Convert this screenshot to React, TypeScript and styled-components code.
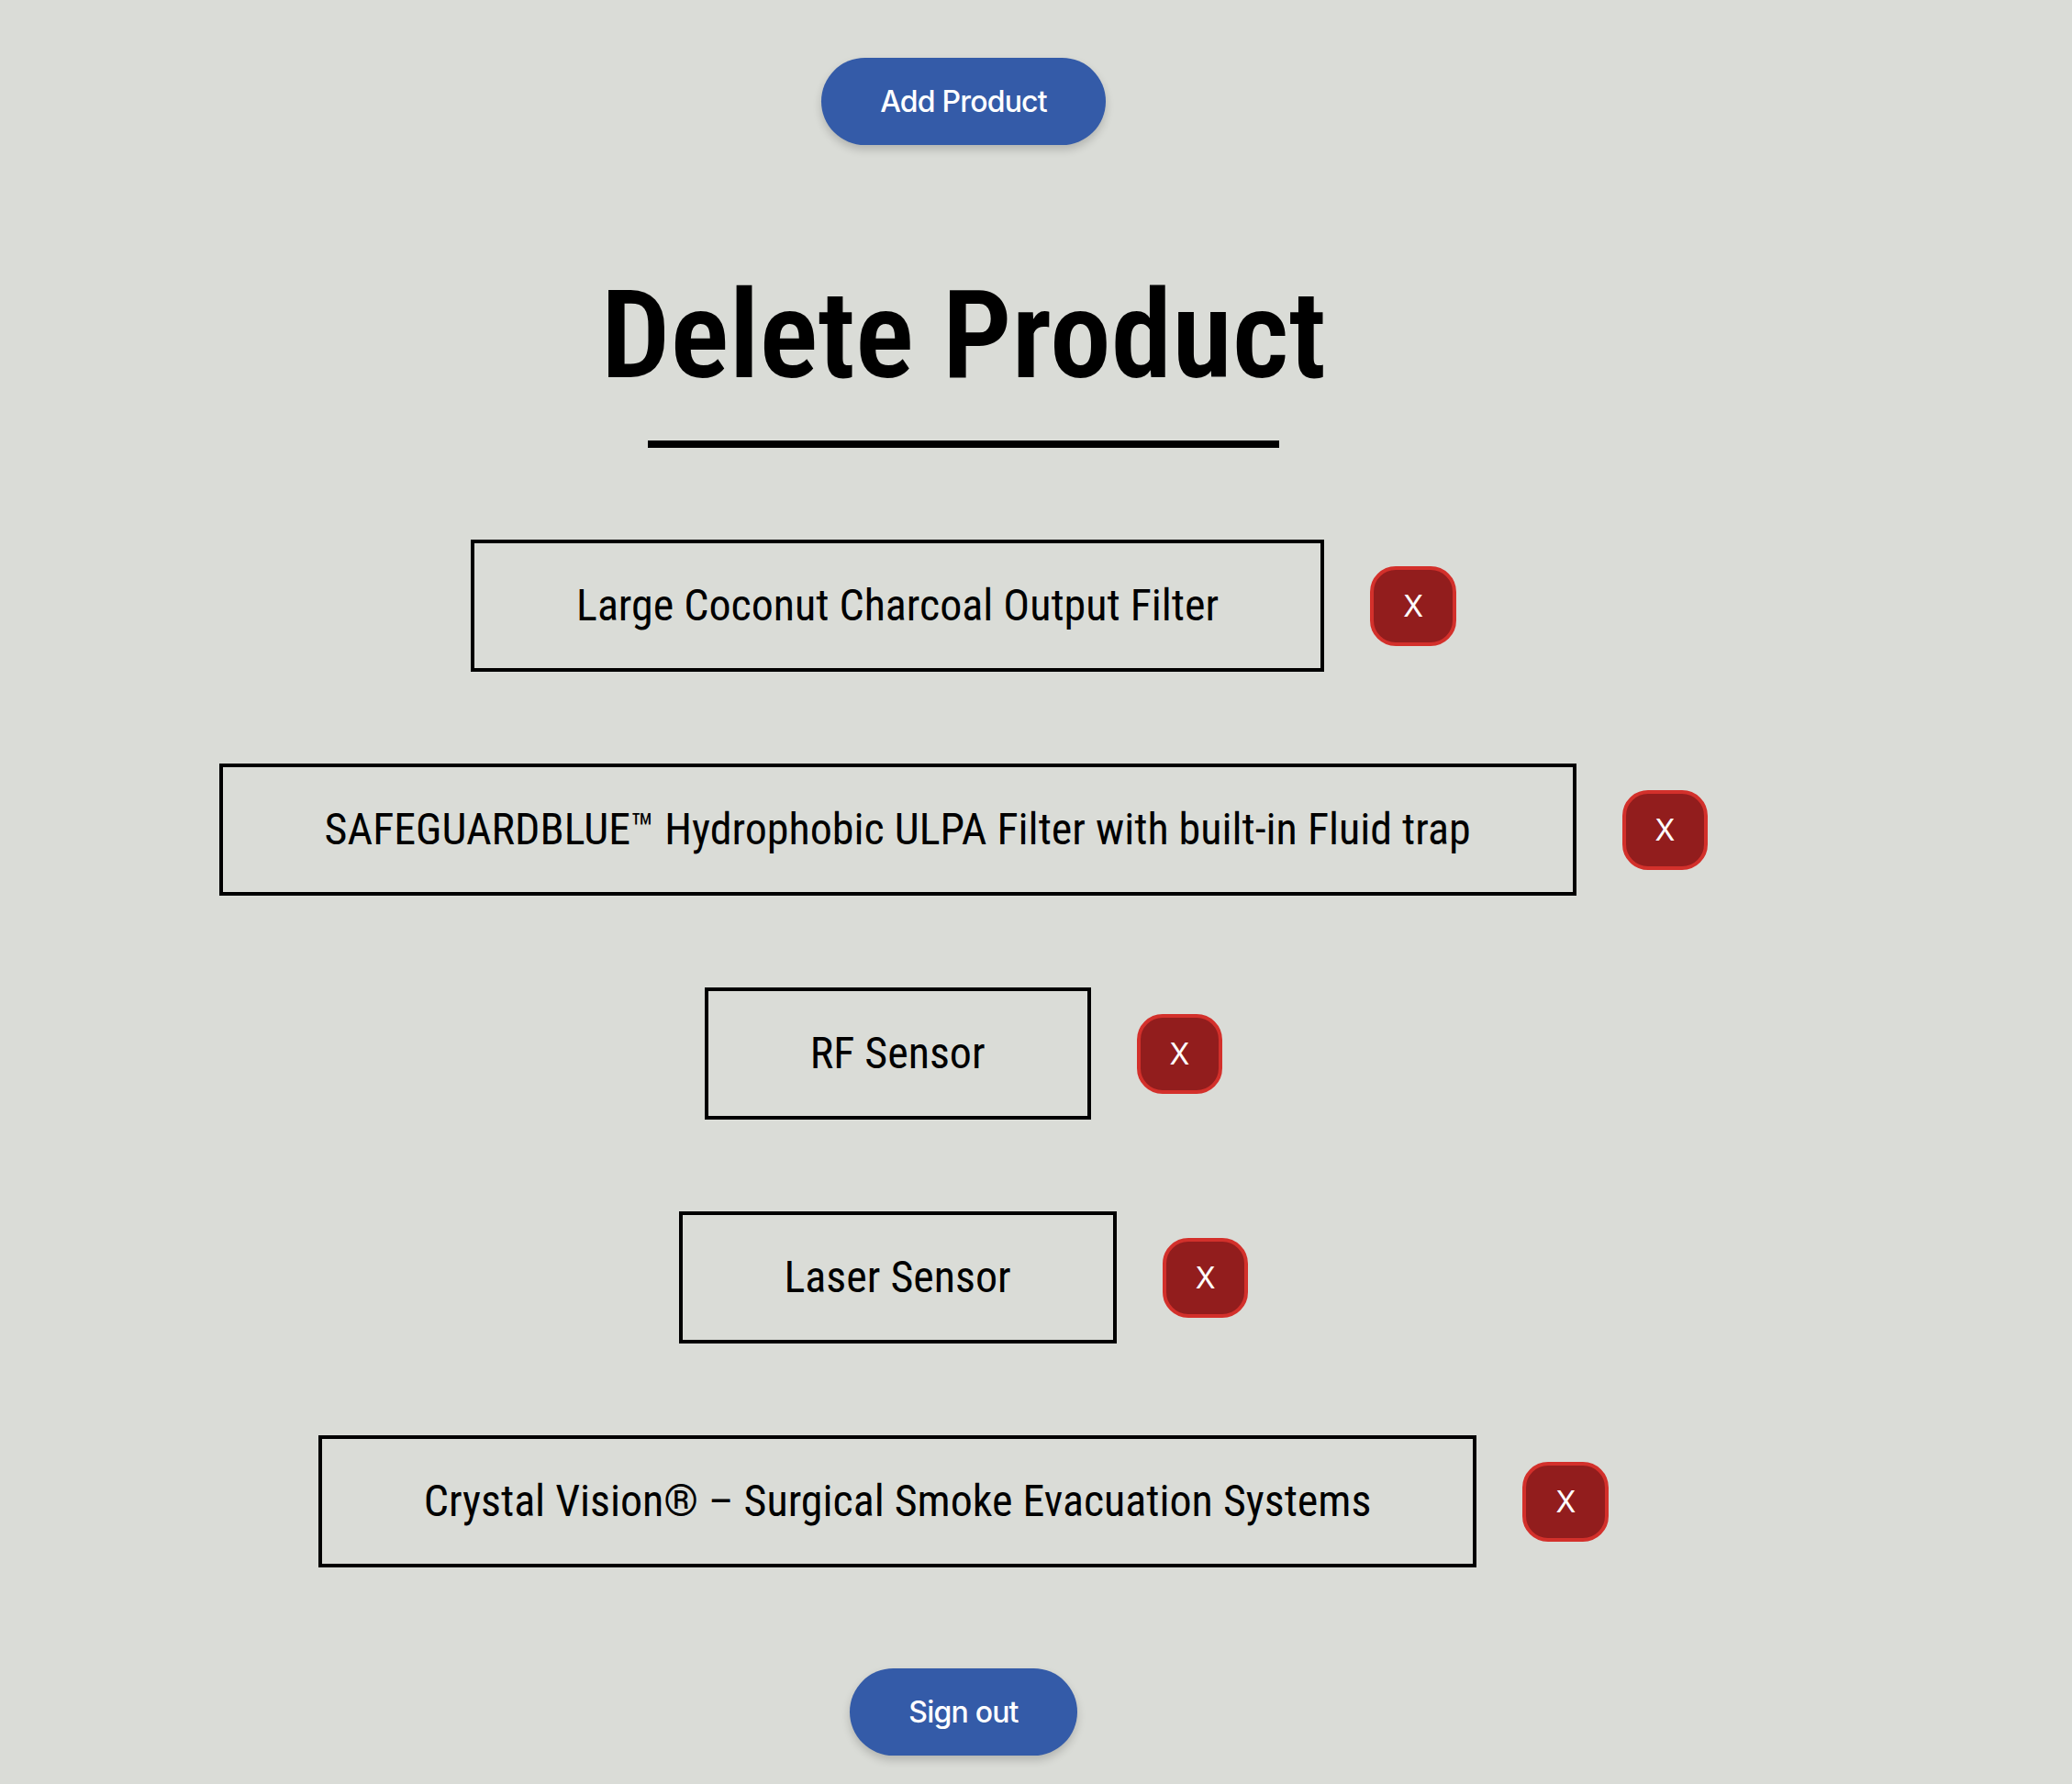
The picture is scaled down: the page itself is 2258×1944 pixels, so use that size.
import React from "react";
import styled, { createGlobalStyle } from "styled-components";

const GlobalStyle = createGlobalStyle`
  html, body {
    margin: 0;
    padding: 0;
    background: #dadcd7;
  }
  body {
    font-family: "Roboto Condensed", Roboto, "Liberation Sans", sans-serif;
    color: #000;
  }
`;

const Page = styled.main`
  width: 2100px;
  min-height: 1944px;
  box-sizing: border-box;
  padding-top: 63px;
  display: flex;
  flex-direction: column;
  align-items: center;
`;

const PillButton = styled.button`
  font-family: Inter, "Noto Sans", sans-serif;
  font-size: 32px;
  line-height: 39px;
  font-weight: 500;
  letter-spacing: -0.8px;
  color: #fff;
  background: #345ba8;
  border: none;
  border-radius: 48px;
  padding: 28px 64px;
  box-shadow: 0 5px 10px rgba(0, 0, 0, 0.18);
  cursor: pointer;
`;

const Title = styled.h1`
  margin: 129px 0 0;
  font-family: "Roboto Condensed", Roboto, sans-serif;
  font-stretch: 75%;
  font-size: 134px;
  line-height: 157px;
  font-weight: 600;
  color: #000;
`;

const Rule = styled.hr`
  width: 688px;
  height: 8px;
  margin: 36px 0 0;
  border: none;
  background: #000;
`;

const List = styled.ul`
  list-style: none;
  margin: 100px 0 0;
  padding: 0;
  display: flex;
  flex-direction: column;
  align-items: center;
  gap: 100px;
`;

const Row = styled.li`
  display: flex;
  align-items: center;
  gap: 50px;
`;

const ProductName = styled.div`
  border: 4px solid #000;
  padding: 40px 111px;
  font-family: "Roboto Condensed", Roboto, sans-serif;
  font-stretch: 75%;
  font-size: 48px;
  line-height: 56px;
  font-weight: 400;
  white-space: nowrap;
`;

const DeleteButton = styled.button`
  font-family: Inter, "Noto Sans", sans-serif;
  font-size: 32px;
  line-height: 39px;
  font-weight: 400;
  color: #fff;
  background: #921d1d;
  border: 4px solid #d3302b;
  border-radius: 28px;
  padding: 20px 32px;
  cursor: pointer;
`;

const SignOut = styled(PillButton)`
  margin-top: 110px;
`;

const products = [
  "Large Coconut Charcoal Output Filter",
  "SAFEGUARDBLUE™ Hydrophobic ULPA Filter with built-in Fluid trap",
  "RF Sensor",
  "Laser Sensor",
  "Crystal Vision® – Surgical Smoke Evacuation Systems",
];

export default function App() {
  return (
    <>
      <GlobalStyle />
      <Page>
        <PillButton>Add Product</PillButton>
        <Title>Delete Product</Title>
        <Rule />
        <List>
          {products.map((p) => (
            <Row key={p}>
              <ProductName>{p}</ProductName>
              <DeleteButton>X</DeleteButton>
            </Row>
          ))}
        </List>
        <SignOut>Sign out</SignOut>
      </Page>
    </>
  );
}
